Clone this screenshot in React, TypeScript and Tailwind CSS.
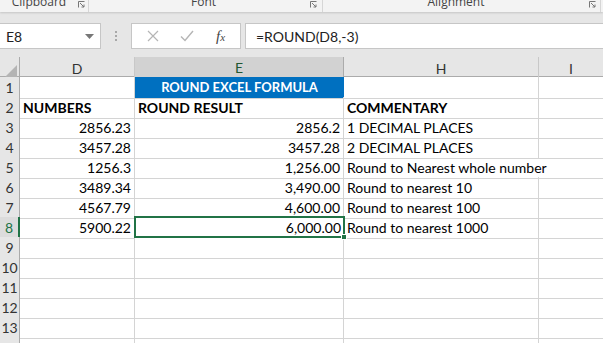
import React from "react"

const cellFont = { fontFamily: "Lato, 'Open Sans', sans-serif" }

type Row = {
  n: number
  d?: string
  e?: string
  h?: string
  bold?: boolean
  title?: boolean
}

const rows: Row[] = [
  { n: 1, title: true, e: "ROUND EXCEL FORMULA" },
  { n: 2, bold: true, d: "NUMBERS", e: "ROUND RESULT", h: "COMMENTARY" },
  { n: 3, d: "2856.23", e: "2856.2", h: "1 DECIMAL PLACES" },
  { n: 4, d: "3457.28", e: "3457.28", h: "2 DECIMAL PLACES" },
  { n: 5, d: "1256.3", e: "1,256.00", h: "Round to Nearest whole number" },
  { n: 6, d: "3489.34", e: "3,490.00", h: "Round to nearest 10" },
  { n: 7, d: "4567.79", e: "4,600.00", h: "Round to nearest 100" },
  { n: 8, d: "5900.22", e: "6,000.00", h: "Round to nearest 1000" },
  { n: 9 },
  { n: 10 },
  { n: 11 },
  { n: 12 },
  { n: 13 },
  { n: 14 },
]

function Launcher() {
  return (
    <svg width="7" height="7" viewBox="0 0 7 7" className="text-[#777]">
      <path d="M0.5 0.5 H6.5 M0.5 0.5 V6.5" stroke="currentColor" strokeWidth="1" fill="none" />
      <path d="M2 2 L6 6 M3.5 6 H6 V3.5" stroke="currentColor" strokeWidth="1" fill="none" />
    </svg>
  )
}

function Ribbon() {
  return (
    <div className="h-[12px] bg-[#f3f3f3] flex text-[12px] text-[#444] overflow-hidden shadow-[0_1px_2px_rgba(0,0,0,0.15)] relative z-10" style={{ fontFamily: "'Open Sans', sans-serif" }}>
      <div className="w-[89px] flex items-start border-r border-[#d6d6d6]">
        <div className="w-[78px] text-center leading-[12px] -mt-[4px]">Clipboard</div>
        <div className="mt-[1px]"><Launcher /></div>
      </div>
      <div className="w-[234px] flex items-start border-r border-[#d6d6d6]">
        <div className="w-[221px] text-center leading-[12px] -mt-[4px] pl-[8px]">Font</div>
        <div className="mt-[1px]"><Launcher /></div>
      </div>
      <div className="w-[278px] flex items-start border-r border-[#d6d6d6]">
        <div className="w-[266px] text-center leading-[12px] -mt-[4px]">Alignment</div>
        <div className="mt-[1px]"><Launcher /></div>
      </div>
    </div>
  )
}

function FormulaBar() {
  return (
    <div className="h-[45px] bg-[#e6e6e6] flex items-center pt-[3px] text-[14px]" style={cellFont}>
      <div className="w-[101px] h-[26px] bg-white border border-[#c6c6c6] border-l-0 flex items-center justify-between pl-[6px] pr-[6px]">
        <span className="text-[#222]">E8</span>
        <svg width="9" height="5" viewBox="0 0 9 5"><path d="M0 0 H9 L4.5 5 Z" fill="#777" /></svg>
      </div>
      <div className="w-[30px] flex flex-col items-center gap-[2px]">
        <span className="w-[2px] h-[2px] bg-[#a8a8a8]" />
        <span className="w-[2px] h-[2px] bg-[#a8a8a8]" />
        <span className="w-[2px] h-[2px] bg-[#a8a8a8]" />
      </div>
      <div className="w-[110px] h-[26px] bg-white border border-[#c6c6c6] flex items-center justify-around px-[4px]">
        <svg width="12" height="12" viewBox="0 0 12 12"><path d="M1 1 L11 11 M11 1 L1 11" stroke="#b5b5b5" strokeWidth="1.2" /></svg>
        <svg width="14" height="12" viewBox="0 0 14 12"><path d="M1 6.5 L5 10.5 L13 1" stroke="#b5b5b5" strokeWidth="1.4" fill="none" /></svg>
        <span className="text-[#444] italic text-[15px]" style={{ fontFamily: "'Liberation Serif', serif" }}>f<span className="text-[11px]">x</span></span>
      </div>
      <div className="flex-1 h-[26px] ml-[4px] bg-white border border-[#c6c6c6] border-r-0 flex items-center pl-[10px] text-[#222]">
        =ROUND(D8,-3)
      </div>
    </div>
  )
}

function Sheet() {
  const cols = "grid grid-cols-[20px_115px_209px_195px_1fr]"
  return (
    <div className="text-[14px] text-black" style={cellFont}>
      <div className={`${cols} h-[20px] bg-[#e6e6e6] border-b border-[#ababab] text-[#333]`}>
        <div className="border-r border-[#ababab] relative">
          <svg width="12" height="12" viewBox="0 0 12 12" className="absolute right-[2px] bottom-[2px]"><path d="M12 0 V12 H0 Z" fill="#b4b4b4" /></svg>
        </div>
        <div className="border-r border-[#c8c8c8] flex items-center justify-center">D</div>
        <div className="bg-[#d2d2d2] border-r border-[#ababab] border-b-2 border-b-[#217346] -mb-[1px] flex items-center justify-center text-[#215732]">E</div>
        <div className="border-r border-[#c8c8c8] flex items-center justify-center">H</div>
        <div className="flex items-center justify-center">I</div>
      </div>
      {rows.map((r) => {
        const sel = r.n === 8
        return (
          <div key={r.n} className={`${cols} h-[20px]`}>
            <div
              className={`border-b border-[#d4d4d4] flex items-center justify-center text-[#333] ${sel ? "bg-[#dcdcdc] border-r-2 border-r-[#217346] text-[#217346]" : "bg-[#e6e6e6] border-r border-r-[#ababab]"}`}
            >
              {r.n}
            </div>
            <div className={`border-r border-b border-[#d4d4d4] flex items-center px-[3px] ${r.bold ? "font-bold justify-start" : "justify-end"}`}>
              {r.d}
            </div>
            {r.title ? (
              <div className="bg-[#0070c0] border-b border-[#d4d4d4] flex items-center justify-center font-bold text-white text-[13px]">{r.e}</div>
            ) : sel ? (
              <div className="relative border-2 border-[#217346] -mt-[1px] -ml-[1px] -mr-[1px] h-[22px] flex items-center justify-end px-[2px] z-10 bg-white">
                {r.e}
                <span className="absolute -right-[4px] -bottom-[4px] w-[6px] h-[6px] bg-[#217346] border border-white" />
              </div>
            ) : (
              <div className={`border-r border-b border-[#d4d4d4] flex items-center px-[3px] ${r.bold ? "font-bold justify-start" : "justify-end"}`}>
                {r.e}
              </div>
            )}
            <div className={`border-r border-b border-[#d4d4d4] flex items-center px-[3px] whitespace-nowrap ${r.bold ? "font-bold" : ""} ${r.n === 5 ? "overflow-visible border-r-transparent" : ""}`}>
              {r.h}
            </div>
            <div className="border-b border-[#d4d4d4]" />
          </div>
        )
      })}
    </div>
  )
}

export default function App() {
  return (
    <div className="w-[603px] h-[343px] overflow-hidden bg-white">
      <Ribbon />
      <FormulaBar />
      <Sheet />
    </div>
  )
}
